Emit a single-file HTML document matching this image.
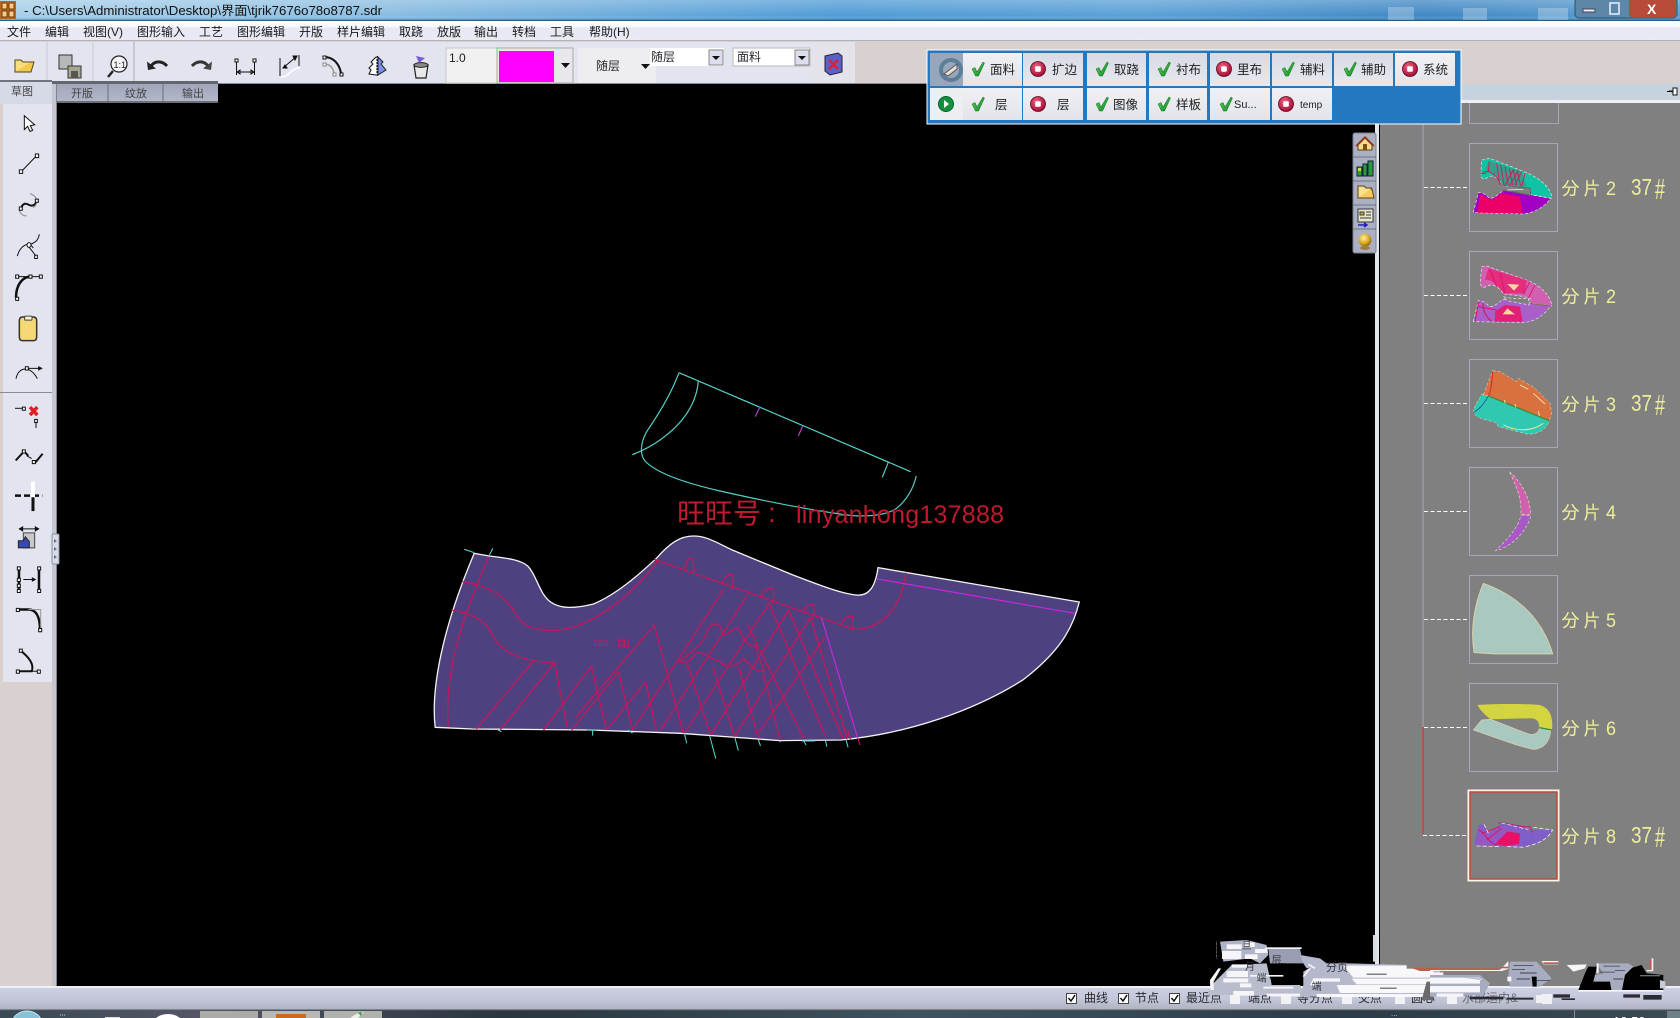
<!DOCTYPE html>
<html><head><meta charset="utf-8"><title>CAD</title>
<style>
html,body{margin:0;padding:0;background:#000;width:1680px;height:1018px;overflow:hidden}
svg{display:block;position:absolute;left:0;top:0}
text{font-family:"Liberation Sans","Noto Sans CJK SC",sans-serif}
.m{font-size:12px;fill:#1a1a1a}
.b{font-size:12.5px;fill:#222}
.y text{font-size:19px;fill:#eeee9c;font-family:"Liberation Sans","IPAGothic","WenQuanYi Zen Hei",sans-serif}
.y .c{letter-spacing:2px}
.y .n{font-size:23px}
.y .h{font-size:29px}
.ns *{vector-effect:non-scaling-stroke}
.s{font-size:12px;fill:#2a2a30}
.g{font-size:13px;fill:#33333c}
.tab{font-size:11px;fill:#444}
</style></head><body>
<svg width="1680" height="1018" viewBox="0 0 1680 1018" xmlns="http://www.w3.org/2000/svg">
<defs>
<linearGradient id="tb" x1="0" y1="0" x2="1" y2="0"><stop offset="0" stop-color="#a8cfe8"/><stop offset=".2" stop-color="#8fc0e2"/><stop offset=".5" stop-color="#4f9bd6"/><stop offset=".68" stop-color="#5aa0d6"/><stop offset=".85" stop-color="#3f87c4"/><stop offset="1" stop-color="#5b9ed0"/></linearGradient>
<linearGradient id="tbv" x1="0" y1="0" x2="0" y2="1"><stop offset="0" stop-color="#fff" stop-opacity=".25"/><stop offset=".8" stop-color="#fff" stop-opacity="0"/><stop offset="1" stop-color="#1c5f94" stop-opacity=".5"/></linearGradient>
<linearGradient id="mn" x1="0" y1="0" x2="0" y2="1"><stop offset="0" stop-color="#fff"/><stop offset=".3" stop-color="#f6f7fc"/><stop offset=".35" stop-color="#e6e8f4"/><stop offset="1" stop-color="#e8eaf4"/></linearGradient>
<linearGradient id="sb" x1="0" y1="0" x2="0" y2="1"><stop offset="0" stop-color="#cdd0e4"/><stop offset=".5" stop-color="#c4c7da"/><stop offset="1" stop-color="#aeb1bf"/></linearGradient>
<linearGradient id="tk" x1="0" y1="0" x2="1" y2="0"><stop offset="0" stop-color="#3a4a55"/><stop offset=".12" stop-color="#556"/><stop offset=".3" stop-color="#2a3640"/><stop offset=".55" stop-color="#40535f"/><stop offset=".8" stop-color="#2c3c48"/><stop offset="1" stop-color="#3c4a54"/></linearGradient>
<linearGradient id="bt" x1="0" y1="0" x2="0" y2="1"><stop offset="0" stop-color="#f0f0f4"/><stop offset="1" stop-color="#e2e4ea"/></linearGradient>
<linearGradient id="bt2" x1="0" y1="0" x2="0" y2="1"><stop offset="0" stop-color="#d8dbe4"/><stop offset="1" stop-color="#e6e8ee"/></linearGradient>
<linearGradient id="rt" x1="0" y1="0" x2="0" y2="1"><stop offset="0" stop-color="#9da2b8"/><stop offset="1" stop-color="#b4b8ca"/></linearGradient>
<linearGradient id="ck" x1="0" y1="0" x2="1" y2="1"><stop offset="0" stop-color="#60d060"/><stop offset="1" stop-color="#0c8a20"/></linearGradient>
<radialGradient id="rr" cx=".4" cy=".35" r=".7"><stop offset="0" stop-color="#f06080"/><stop offset="1" stop-color="#a00830"/></radialGradient>
<radialGradient id="gold" cx=".4" cy=".35" r=".7"><stop offset="0" stop-color="#fff0a0"/><stop offset=".6" stop-color="#d8a820"/><stop offset="1" stop-color="#806010"/></radialGradient>
<g id="ok"><path d="M0,2 L3,0.500 L5,5 L11,-5 L12.500,-4 L6.500,9 L3.500,9 Z" fill="url(#ck)" stroke="#0c6a18" stroke-width=".5"/></g>
<g id="no"><circle r="7.500" fill="url(#rr)" stroke="#60041c" stroke-width=".8"/><rect x="-2.800" y="-2.800" width="5.600" height="5.600" rx="1" fill="#fff"/></g>
</defs>

<!-- base -->
<rect width="1680" height="1018" fill="#000"/>
<!-- titlebar -->
<rect width="1680" height="20" fill="url(#tb)"/>
<rect width="1680" height="20" fill="url(#tbv)"/>
<rect y="20" width="1680" height="1" fill="#1f5d8e"/>
<g fill="#d6e4ee" opacity=".35"><rect x="1388" y="7" width="26" height="13"/><rect x="1463" y="8" width="24" height="12"/><rect x="1538" y="8" width="30" height="12"/></g>
<rect x="0" y="1" width="16" height="18" fill="#b96a20"/><path d="M2,3h5v6h-5zM9,3h5v6h-5zM2,11h5v6h-5zM9,11h5v6h-5z" fill="#f0d090" stroke="#7a3a10"/>
<text x="24" y="15" font-size="12.500" fill="#111" textLength="358" lengthAdjust="spacingAndGlyphs">- C:\Users\Administrator\Desktop\界面\tjrik7676o78o8787.sdr</text>
<!-- window btns -->
<rect x="1575" y="-2" width="102" height="20" rx="4" fill="#5d87a8" stroke="#2d4f6c"/>
<rect x="1629" y="-1" width="47" height="18" rx="3" fill="#b84a3a"/>
<rect x="1583" y="9" width="12" height="3" fill="#eef" stroke="#445"/>
<rect x="1610" y="3" width="9" height="11" fill="none" stroke="#eef" stroke-width="1.500"/>
<text x="1647" y="14" font-size="14" font-weight="bold" fill="#fff">X</text>

<!-- menu -->
<rect y="21" width="1680" height="20" fill="url(#mn)"/>
<rect y="40" width="1680" height="1" fill="#b0b2bc"/>
<g class="m">
<text x="7" y="36">文件</text><text x="45" y="36">编辑</text><text x="83" y="36">视图(V)</text><text x="137" y="36">图形输入</text><text x="199" y="36">工艺</text><text x="237" y="36">图形编辑</text><text x="299" y="36">开版</text><text x="337" y="36">样片编辑</text><text x="399" y="36">取跷</text><text x="437" y="36">放版</text><text x="474" y="36">输出</text><text x="512" y="36">转档</text><text x="550" y="36">工具</text><text x="589" y="36">帮助(H)</text>
</g>

<!-- toolbar -->
<rect y="41" width="1680" height="43" fill="#d9d1cf"/>
<rect y="42" width="811" height="42" fill="#e2e5ef"/>
<rect x="811" y="42" width="44" height="42" fill="#e4e2ea"/>
<rect y="83" width="930" height="1" fill="#8a8c94"/>
<g stroke="#c6c8d2"><path d="M47,42V84M93,42V84"/></g><path d="M134,42V84" stroke="#a8aab4"/>
<!-- folder -->
<path d="M15,72 L18,62 H34 L31,72 Z" fill="#f4c84a" stroke="#5a4510"/><path d="M15,72 V60 H21 L23,62 H31 V62" fill="#f8dc80" stroke="#5a4510"/>
<!-- save -->
<rect x="59" y="55" width="13" height="14" fill="#b8b8b8" stroke="#333"/>
<rect x="68" y="66" width="13" height="12" fill="#a8a890" stroke="#333"/><rect x="71" y="71" width="7" height="7" fill="#555"/>
<!-- zoom 1:1 -->
<circle cx="119" cy="64" r="8" fill="#f4f4f8" stroke="#222" stroke-width="1.200"/><text x="113.500" y="68" font-size="9" fill="#222">1:1</text><path d="M113,71 L108,77" stroke="#222" stroke-width="2.400"/>
<!-- undo / redo -->
<path d="M151,66 C155,60.500 162,60.500 167,66" fill="none" stroke="#222" stroke-width="3"/><path d="M147,61.500 L148,70 L156,68.500 Z" fill="#222"/>
<path d="M208,66 C204,60.500 197,60.500 192,66" fill="none" stroke="#333" stroke-width="3"/><path d="M212,61.500 L211,70 L203,68.500 Z" fill="#444"/>
<!-- box dim -->
<g fill="none" stroke="#111" stroke-width="1"><rect x="235" y="59" width="3" height="3" fill="#fff"/><rect x="253" y="59" width="3" height="3" fill="#fff"/><path d="M236.500,62V75M254.500,62V75M237,72H254M237,72l3,-2v4zM254,72l-3,-2v4z"/></g>
<!-- line tool -->
<g fill="none" stroke="#111"><path d="M280,58V76M299,55V66M283,68 L297,56"/><path d="M297,56l-4,0l2,4z" fill="#111"/><path d="M283,68l4,0l-2,-3z" fill="#111"/><path d="M281,77 C290,77 290,68 300,68" stroke="#fff" stroke-width="1.500"/></g>
<!-- arc -->
<path d="M324,57 C333,57 339,63 341,73" fill="none" stroke="#111" stroke-width="2"/><rect x="323" y="56" width="3" height="3" fill="#fff" stroke="#111"/><rect x="340" y="73" width="3" height="3" fill="#fff" stroke="#111"/>
<path d="M324,64 C330,64 333,68 334,73" fill="none" stroke="#999" stroke-width="1.500"/><rect x="323" y="63" width="3" height="3" fill="#fff" stroke="#888"/><rect x="333" y="73" width="3" height="3" fill="#fff" stroke="#888"/>
<!-- mirror -->
<path d="M377,56 V76" stroke="#111" stroke-dasharray="2 1"/><path d="M376,57 L371,62 L373,64 L369,68 L371,70 L369,74 L376,75" fill="#fff" stroke="#111"/><path d="M378,57 L383,62 L381,64 L386,70 L378,75 Z" fill="#7a90e0" stroke="#223"/>
<!-- bucket -->
<path d="M414,65 L428,65 L426,78 L416,78 Z" fill="#e8e8e8" stroke="#222" stroke-width="1.200"/><ellipse cx="421" cy="65" rx="7" ry="2.400" fill="#888" stroke="#222"/><path d="M416,56 L425,58 L419,63 Z" fill="#7a5ad8"/>
<!-- fields -->
<rect x="446" y="48" width="51" height="35" fill="#f0f0f0" stroke="#c8c8c8"/><text x="449" y="62" font-size="12" fill="#222">1.0</text>
<rect x="497" y="48" width="76" height="35" fill="#e8e8ec" stroke="#aaa"/>
<rect x="499" y="51" width="55" height="31" fill="#ff00ff"/>
<path d="M561,63h9l-4.500,5z" fill="#111"/>
<rect x="578" y="48" width="78" height="35" fill="#eeeef0"/><text x="596" y="70" class="s" font-size="13">随层</text><path d="M641,64h9l-4.500,5z" fill="#111"/>
<rect x="656" y="48" width="68" height="18" fill="#fff"/><rect x="650" y="48" width="70" height="18" fill="#fff"/><text x="651" y="61" class="s" font-size="13">随层</text>
<rect x="709" y="50" width="14" height="15" fill="#dde" stroke="#888"/><path d="M712,56h8l-4,4z" fill="#111"/>
<rect x="733" y="48" width="77" height="18" fill="#fff" stroke="#bbb"/><text x="737" y="61" class="s" font-size="13">面料</text>
<rect x="795" y="50" width="14" height="15" fill="#dde" stroke="#888"/><path d="M798,56h8l-4,4z" fill="#111"/>
<path d="M825,56 L838,53 L842,56 V72 L830,75 L825,71 Z" fill="#5a60c8" stroke="#223"/><path d="M829,60 L838,69 M838,60 L829,69" stroke="#e02030" stroke-width="2.500"/>

<!-- tabs -->
<rect x="0" y="80" width="52" height="24" fill="#d6d9e6"/><rect y="80" width="52" height="2" fill="#70747e"/>
<text x="11" y="95" class="tab">草图</text>
<rect x="52" y="81" width="166" height="22" fill="url(#rt)"/><rect x="52" y="81" width="166" height="3" fill="#62666e"/><rect x="52" y="101" width="166" height="2" fill="#6c7078"/>
<path d="M108,84V101M163,84V101" stroke="#6c7078"/>
<text x="71" y="97" class="tab">开版</text><text x="125" y="97" class="tab">纹放</text><text x="182" y="97" class="tab">输出</text>

<!-- left column -->
<rect x="0" y="104" width="52" height="883" fill="#d9d1cf"/>
<rect x="3" y="104" width="49" height="578" fill="#e2e5ef"/>
<rect x="52" y="84" width="5" height="903" fill="#c4c7d2"/>
<rect x="56" y="84" width="1" height="903" fill="#80828c"/>
<rect x="0" y="392" width="52" height="1" fill="#8a8c94"/>
<rect x="52" y="534" width="7" height="30" rx="1" fill="#d8dae6" stroke="#8a8ea0"/><path d="M54,539l3,2l-3,2zM54,547l3,2l-3,2zM54,555l3,2l-3,2z" fill="#6c7090"/>

<g transform="translate(0,90) scale(.3333,.3954)" class="ns" fill="none" stroke="#111" stroke-width="1">
<path d="M73,65 L73,100 L83,92 L90,105 L98,102 L91,90 L104,88 Z" fill="#fff"/>
<path d="M63,207 L111,165"/><rect x="58" y="202" width="10" height="9" fill="#fff"/><rect x="106" y="162" width="10" height="9" fill="#fff"/>
<path d="M63,298 C80,270 90,310 111,282" stroke-width="2"/><path d="M90,262 C112,268 118,285 100,298 M58,300 C58,312 70,320 80,318" stroke="#888"/><rect x="58" y="296" width="9" height="8" fill="#fff"/><rect x="106" y="276" width="9" height="8" fill="#fff"/>
<path d="M52,420 C60,395 85,380 100,400 M118,365 C112,390 95,385 85,395 L108,420"/><circle cx="87" cy="392" r="6" fill="#fff"/><rect x="104" y="418" width="8" height="8" fill="#fff"/>
<path d="M48,525 C48,490 70,472 92,472" stroke-width="2.500"/><path d="M50,472H122"/><rect x="47" y="468" width="9" height="8" fill="#fff"/><rect x="87" y="468" width="9" height="8" fill="#fff"/><rect x="118" y="468" width="9" height="8" fill="#fff"/><rect x="47" y="524" width="9" height="8" fill="#fff"/>
<path d="M58,584 Q58,574 68,574 H100 Q110,574 110,584 V624 Q110,634 100,634 H68 Q58,634 58,624 Z" fill="#f6d878" stroke="#333" stroke-width="1.500"/><rect x="74" y="572" width="22" height="10" rx="2" fill="#f8f0d0" stroke="#444"/>
<path d="M48,730 C55,700 90,695 112,730"/><path d="M80,704 H125"/><path d="M125,704l-9,-4v8z" fill="#111"/><rect x="76" y="700" width="9" height="8" fill="#fff"/>
<path d="M45,805 H68"/><rect x="67" y="802" width="9" height="8" fill="#fff"/><path d="M90,802 L112,822 M112,802 L90,822" stroke="#e02020" stroke-width="3.500"/><rect x="104" y="833" width="8" height="8" fill="#fff"/><path d="M108,841 V855"/>
<path d="M47,937 L72,914 L85,925" stroke-width="2"/><rect x="67" y="910" width="9" height="8" fill="#fff"/><path d="M80,925 L95,932"/><path d="M105,943 L128,920" stroke-width="2"/><rect x="97" y="937" width="9" height="8" fill="#fff"/>
<path d="M45,1026 H127" stroke-width="2.500" stroke-dasharray="6 3"/><path d="M99,990 V1030" stroke="#fff" stroke-width="4"/><path d="M99,1030 V1065" stroke-width="3"/>
<path d="M58,1110 H116"/><path d="M58,1110l10,-5v10zM116,1110l-10,-5v10z" fill="#111"/><rect x="70" y="1120" width="34" height="38" fill="#c8c8c8" stroke="#444"/><path d="M55,1158 V1140 L70,1140 L76,1130 L88,1142 V1158 Z" fill="#3848b0" stroke="#223"/>
<path d="M57,1210 V1265 M117,1210 V1265" stroke-width="2.500"/><path d="M70,1238 H106"/><path d="M106,1238l-9,-4v8z" fill="#111"/><g fill="#fff"><rect x="52" y="1206" width="9" height="8"/><rect x="52" y="1235" width="9" height="8"/><rect x="52" y="1250" width="9" height="8"/><rect x="52" y="1263" width="9" height="8"/><rect x="113" y="1206" width="9" height="8"/><rect x="113" y="1263" width="9" height="8"/></g>
<path d="M52,1314 H85 C110,1314 120,1335 120,1365" stroke-width="2.500"/><path d="M85,1314 H122 V1360" stroke="#999"/><rect x="49" y="1311" width="9" height="8" fill="#fff"/><rect x="116" y="1362" width="9" height="8" fill="#fff"/>
<path d="M62,1418 C80,1430 105,1450 95,1470 H52" stroke-width="2"/><path d="M95,1470 H118"/><rect x="58" y="1414" width="9" height="8" fill="#fff"/><rect x="49" y="1467" width="9" height="8" fill="#fff"/><rect x="112" y="1467" width="9" height="8" fill="#fff"/>
</g>

<!-- canvas drawing: upper piece -->
<g transform="translate(620,360) scale(.3333)" class="ns" fill="none" stroke="#55cfc6" stroke-width="1.200">
<path d="M177,38 L872,335"/>
<path d="M177,38 C150,110 110,170 80,215 C60,250 60,285 75,303 C110,340 200,370 300,393 C420,420 540,445 660,462 C740,475 800,465 830,445 C860,420 880,385 889,348"/>
<path d="M235,62 C230,130 190,190 120,240 C90,262 60,275 37,284"/>
<path d="M805,307 L787,352"/>
<path d="M420,140 L406,170" stroke="#b040c8"/>
<path d="M548,198 L535,228" stroke="#b040c8"/>
</g>

<!-- main shoe -->
<g transform="translate(420,530) scale(.4337,.3333)" class="ns">
<path d="M35,592 C25,480 50,300 125,70 L160,78 C205,85 235,90 250,110 C270,140 275,190 300,215 C320,235 350,238 400,222 C450,195 500,140 545,85 C575,40 600,18 630,18 C660,18 680,35 720,60 L860,135 C920,165 970,190 1005,195 C1035,200 1050,170 1056,113 L1520,216 C1505,300 1470,370 1390,450 C1280,540 1130,610 970,630 L830,632 L600,610 L390,600 L120,597 Z" fill="#4f4080" stroke="#f4f4f4" stroke-width="1.300"/>
<g fill="none" stroke="#c3185a" stroke-width="1.300">
<path d="M158,80 C110,230 55,400 65,590"/>
<path d="M98,155 C150,165 190,190 215,240 C235,290 265,303 310,302 C390,295 480,210 550,90"/>
<path d="M72,240 C120,250 150,270 165,310 C185,370 240,395 310,398 L340,595"/>
<path d="M540,88 L1000,298 C1060,298 1110,240 1120,128"/>
<path d="M260,395 L130,597 M310,398 L185,600 M395,408 L285,600 M395,408 L430,600 M458,425 L350,600 M458,425 L490,600 M540,285 L360,560 M540,285 L607,610 M520,455 L430,600 M520,455 L545,600"/>
<path d="M700,178 L490,600 M755,195 L555,600 M805,220 L610,610 M850,240 L670,615 M900,262 L725,620 M935,320 L780,610"/>
<path d="M615,398 L670,615 M675,410 L725,620 M735,410 L780,625 M790,420 L830,630 M755,285 L885,625 M805,220 L935,620 M850,240 L975,625 M900,262 L985,625"/>
<path d="M597,395 C620,370 650,350 660,310 C665,280 690,270 695,300 C700,335 720,290 735,295 C745,330 760,355 775,345 C780,390 790,410 795,422 C770,430 760,400 745,385 C735,410 700,420 690,390 C675,395 650,360 635,370 C625,395 610,400 597,395 Z"/>
<path d="M610,122 C612,95 620,82 628,85 C632,100 632,115 630,130 M695,165 C700,140 712,130 720,135 C724,150 722,165 718,178 M785,205 C790,180 805,170 814,175 C818,195 815,210 810,222 M883,250 C888,228 900,220 907,225 C910,245 908,258 905,268 M970,285 C975,265 988,255 997,260 C1000,275 1000,290 997,298"/>
<path d="M978,600 L985,628 M985,600 L993,628"/>
</g>
<path d="M1055,147 L1510,250 M925,260 L1010,628" fill="none" stroke="#c428d8" stroke-width="1.200"/>
<g stroke="#d01858" stroke-width="1" fill="none"><path d="M400,333h9M400,340h9M412,333h9M412,340h9M424,333h9M424,340h9M400,347h34M458,330h10v18h-10zM472,328v22h8v-22"/></g>
<path d="M1010,625 L1014,645" stroke="#d01858" fill="none"/>
<g stroke="#55cfc6" stroke-width="1.100" fill="none"><path d="M102,58 L125,68 M168,55 L160,75 M398,598 V617 M385,600 H410 M480,600 L490,610 M180,600 L188,605 M610,612 L615,640 M668,618 L682,686 M726,623 L734,662 M780,628 L785,648 M830,632 V637 M880,633 H910 M885,633 L890,645 M935,632 L938,650 M982,628 L987,652"/></g>
</g>

<!-- watermark -->
<g fill="#c01a2e">
<text x="677" y="523" font-size="28">旺旺号</text>
<text x="768" y="522" font-size="28">:</text>
<text x="796" y="523" font-size="25" textLength="208" lengthAdjust="spacing" font-family="Liberation Sans">linyanhong137888</text>
</g>

<!-- right panel -->
<rect x="1376" y="84" width="304" height="17" fill="#c5d3de"/>
<rect x="1376" y="100" width="304" height="3" fill="#f0f0f4"/>
<rect x="1375" y="84" width="4" height="903" fill="#e4e6ee"/>
<rect x="1380" y="103" width="300" height="883" fill="#808080"/>
<path d="M1669,91 h4 v-3 h4 v7 h-4 v-3 z M1667,91.500h3" stroke="#111" fill="#fff" stroke-width="1"/>

<!-- right mini toolbar -->
<rect x="1353" y="133" width="23" height="120" rx="2" fill="#acb0c4" stroke="#7c8090"/>
<path d="M1353,157h23M1353,181h23M1353,205h23M1353,229h23" stroke="#70747e"/>
<path d="M1358,150 V145 L1365,138 L1372,145 V150 Z" fill="#f2dc90" stroke="#604010"/><path d="M1356,146 L1365,137 L1374,146" fill="none" stroke="#a03010" stroke-width="1.500"/><rect x="1363" y="144" width="4" height="6" fill="#805010"/>
<path d="M1357,176 V167 H1362 V176 ZM1363,176 V164 H1367 V176ZM1368,176 V161 H1373 V176Z" fill="#2c9a40" stroke="#123"/><rect x="1358" y="168" width="3" height="3" fill="#e8d040"/>
<path d="M1358,198 L1360,189 H1372 L1374,198 Z" fill="#f4cc60" stroke="#604010"/><path d="M1358,198 V186 H1364 L1366,188 H1372" fill="#f8e090" stroke="#604010"/>
<rect x="1358" y="209" width="15" height="13" fill="#e8e8c8" stroke="#334"/><path d="M1360,212h4v3h-4zM1366,212h5M1366,215h5M1360,218h11" stroke="#334" fill="#d0b040"/><path d="M1358,225 h9 m-3,-2 l3,2 l-3,2" stroke="#2020c0" fill="none" stroke-width="1.500"/>
<circle cx="1365" cy="240" r="6.500" fill="url(#gold)"/><ellipse cx="1365" cy="248" rx="5" ry="2" fill="#a08040"/>

<!-- tree lines -->
<path d="M1423,103 V727" stroke="#a8a8bc" fill="none"/>
<path d="M1423,727 V834" stroke="#b84a38" fill="none" stroke-width="1.500"/>
<path d="M1424,187.500H1468M1424,295.500H1468M1424,403.500H1468M1424,511.500H1468M1424,619.500H1468M1424,727.500H1468M1423,835.500H1468" stroke="#fff" stroke-dasharray="4 2.500" fill="none"/>
<!-- boxes -->
<g fill="none" stroke="#a6a6be" stroke-width="1">
<path d="M1469.500,103V123.500H1558.500V103"/>
<rect x="1469.500" y="143.500" width="88" height="88"/>
<rect x="1469.500" y="251.500" width="88" height="88"/>
<rect x="1469.500" y="359.500" width="88" height="88"/>
<rect x="1469.500" y="467.500" width="88" height="88"/>
<rect x="1469.500" y="575.500" width="88" height="88"/>
<rect x="1469.500" y="683.500" width="88" height="88"/>
</g>
<rect x="1468.500" y="790.500" width="90" height="90" fill="none" stroke="#fff4e8" stroke-width="2"/>
<rect x="1470" y="792" width="87" height="87" fill="none" stroke="#b84a38" stroke-width="1.500"/>

<!-- thumbs A -->
<g transform="translate(1420,130) scale(.3333)" class="ns">
<path d="M185,90 L210,85 L320,128 C370,150 395,180 395,205 L330,193 L330,175 L250,168 C240,150 220,130 205,142 C190,150 182,150 183,125 Z" fill="#0fc4a4" stroke="#f4f4f4" stroke-width=".6" stroke-dasharray="3 2"/>
<path d="M160,248 L175,188 C195,185 205,208 215,205 C240,195 245,178 260,182 L392,205 C370,235 340,248 310,252 Z" fill="#a000c4" stroke="#f4f4f4" stroke-width=".6" stroke-dasharray="3 2"/>
<path d="M172,248 L180,195 C195,195 205,210 218,208 L245,190 L300,200 L308,250 Z" fill="#ea0068"/>
<path d="M205,92 L305,125 L320,170 L250,166 C235,142 215,125 195,125 Z" fill="#3c9c8c"/>
<g stroke="#d81458" stroke-width=".9" fill="none"><path d="M208,95 L205,125 M230,100 L240,165 M242,105 L252,165 M255,110 L265,165 M268,115 L278,165 M280,118 L290,165 M292,122 L302,168 M305,125 L285,165 M295,122 L270,165 M280,120 L255,165 M188,128 C200,120 225,125 240,160 M180,130 H200 M315,130 L305,170"/></g>
<path d="M245,165 L330,175 L332,195 M250,180 L330,195" stroke="#666" fill="none" stroke-width="1.200"/>
<path d="M262,180 L310,178" stroke="#fff" fill="none" stroke-width=".7"/>

<path d="M185,410 L200,408 L320,450 C370,470 395,505 395,528 L330,520 L330,505 C300,495 270,495 250,492 C240,475 220,460 205,467 C190,475 182,475 181,455 Z" fill="#d060b0" stroke="#f4f4f4" stroke-width=".6" stroke-dasharray="3 2"/>
<path d="M160,575 L175,512 C195,510 205,532 215,530 C240,520 245,505 260,508 L392,528 C370,560 340,575 310,578 Z" fill="#a860c8" stroke="#f4f4f4" stroke-width=".6" stroke-dasharray="3 2"/>
<path d="M205,415 L320,450 L315,490 L250,490 C235,465 210,445 195,450 Z" fill="#e82070" opacity=".8"/>
<path d="M225,545 L255,525 L300,530 L308,575 L225,575 Z" fill="#e8186a" opacity=".9"/>
<g stroke="#e01060" stroke-width=".9" fill="none"><path d="M210,420 L230,470 M240,430 L255,490 M330,455 L310,492 M345,465 L325,505"/></g>
<path d="M262,462 L298,464 L282,482 Z" fill="#f8d8a0"/><path d="M262,535 L248,553 L285,553 Z" fill="#f8d8a0"/>
<path d="M176,515 L165,575 M190,520 C185,540 205,570 215,572 M175,530 L230,540" stroke="#d81458" fill="none"/>
<path d="M330,520 L392,528" stroke="#7a7040" fill="none"/>
<path d="M250,500 C280,508 300,505 325,505 L328,525 L262,512 Z" fill="#808080" stroke="#fff" stroke-width=".6" stroke-dasharray="3 2"/>

<path d="M218,722 L240,725 L290,755 L295,745 L345,775 L390,820 L395,850 L388,872 L205,798 L190,795 Z" fill="#d87040" stroke="#f0e8c0" stroke-width=".5" stroke-dasharray="3 2"/>
<path d="M185,793 L205,798 L388,872 C380,900 350,915 320,912 L235,890 L230,878 C200,870 165,865 160,845 C165,820 178,810 185,793 Z" fill="#30c8b0" stroke="#f0e8c0" stroke-width=".5" stroke-dasharray="3 2"/>
<path d="M218,725 C216,760 212,785 205,798" stroke="#e02030" fill="none"/>
<path d="M205,798 C190,825 178,838 160,848" stroke="#2050a0" fill="none" stroke-width=".8"/>
<path d="M205,798 L388,872" stroke="#3a8a30" fill="none" stroke-width="1.200"/>
<path d="M300,765 L325,778 M340,790 L375,822 M250,885 C290,905 335,905 370,880 M253,810 L256,820 M285,822 L288,832 M355,843 L358,858" stroke="#f0e0a0" fill="none" stroke-width="1"/>
</g>

<!-- thumbs B -->
<g transform="translate(1420,460) scale(.3333)" class="ns">
<path d="M268,35 C295,60 330,100 332,165 L303,162 C305,110 285,70 268,35 Z" fill="#d060b0" stroke="#f0e8c0" stroke-width=".6" stroke-dasharray="3 2"/>
<path d="M303,165 L332,168 C320,215 275,260 227,272 C260,240 295,205 303,165 Z" fill="#a858c8" stroke="#f0e8c0" stroke-width=".6" stroke-dasharray="3 2"/>
<path d="M190,370 C260,395 360,450 398,582 L225,582 L162,578 C150,500 165,430 190,370 Z" fill="#a8c8c0" stroke="#e8d8a8" stroke-width=".8"/>
<path d="M172,735 C240,730 330,732 360,735 C390,745 400,770 396,810 L358,803 C358,785 350,775 330,775 L212,778 C195,765 180,750 172,735 Z" fill="#d4d440"/>
<path d="M185,780 L212,778 L320,820 C345,830 358,815 358,803 L392,812 C390,845 370,868 340,868 C300,860 260,845 160,810 Z" fill="#a8c8c0" stroke="#e8d8a8" stroke-width=".6"/>
<path d="M358,803 L396,810" stroke="#2a8a2a" fill="none" stroke-width="1.200"/>

<path d="M163,1155 L175,1095 L192,1093 L205,1120 L245,1090 L300,1095 L330,1110 L398,1110 C385,1135 360,1150 315,1160 Z" fill="#8060c8"/>
<path d="M170,1157 L178,1100 L200,1120 L240,1098 L280,1110 L300,1160 Z" fill="#9458c0"/>
<path d="M225,1152 L262,1115 L300,1120 L298,1152 L255,1158 Z" fill="#ea1068"/>
<path d="M175,1110 C195,1115 205,1150 230,1155 M185,1120 L240,1100 M200,1140 L245,1105 M235,1090 C260,1085 300,1105 330,1100 L338,1118" stroke="#d81458" fill="none" stroke-width=".9"/>
<path d="M192,1093 L205,1120 M245,1090 C270,1093 300,1105 325,1108 M340,1102 L398,1110 C385,1135 360,1150 318,1160 M170,1158 L240,1160 M262,1160 L315,1162" stroke="#fff" fill="none" stroke-width=".7" stroke-dasharray="4 2"/>
</g>

<!-- labels -->
<g class="y">
<text class="c" x="1561" y="195">分片</text><text x="1606" y="195" textLength="10" lengthAdjust="spacingAndGlyphs">2</text><text class="n" x="1631" y="195" textLength="21" lengthAdjust="spacingAndGlyphs">37</text><text class="h" x="1655" y="199" textLength="10" lengthAdjust="spacingAndGlyphs">#</text>
<text class="c" x="1561" y="303">分片</text><text x="1606" y="303" textLength="10" lengthAdjust="spacingAndGlyphs">2</text>
<text class="c" x="1561" y="411">分片</text><text x="1606" y="411" textLength="10" lengthAdjust="spacingAndGlyphs">3</text><text class="n" x="1631" y="411" textLength="21" lengthAdjust="spacingAndGlyphs">37</text><text class="h" x="1655" y="415" textLength="10" lengthAdjust="spacingAndGlyphs">#</text>
<text class="c" x="1561" y="519">分片</text><text x="1606" y="519" textLength="10" lengthAdjust="spacingAndGlyphs">4</text>
<text class="c" x="1561" y="627">分片</text><text x="1606" y="627" textLength="10" lengthAdjust="spacingAndGlyphs">5</text>
<text class="c" x="1561" y="735">分片</text><text x="1606" y="735" textLength="10" lengthAdjust="spacingAndGlyphs">6</text>
<text class="c" x="1561" y="843">分片</text><text x="1606" y="843" textLength="10" lengthAdjust="spacingAndGlyphs">8</text><text class="n" x="1631" y="843" textLength="21" lengthAdjust="spacingAndGlyphs">37</text><text class="h" x="1655" y="847" textLength="10" lengthAdjust="spacingAndGlyphs">#</text>
</g>

<!-- floating panel -->
<rect x="927" y="50" width="534" height="74" fill="#2478c0" stroke="#fff" stroke-width="1"/>
<rect x="930" y="53" width="33" height="33" fill="#98a6bc"/>
<rect x="930" y="88" width="33" height="32" fill="#eceef2"/>
<circle cx="951" cy="70" r="10" fill="none" stroke="#5a7f96" stroke-width="4"/><path d="M944,74 L957,64 L957,69 L948,76 Z" fill="#e8e0d0" stroke="#556"/>
<circle cx="946" cy="104" r="7.500" fill="#15903a" stroke="#063"/><path d="M944,100 l5,4 l-5,4 z" fill="#fff"/>
<g>
<rect x="963" y="53" width="59" height="33" fill="url(#bt)"/>
<rect x="1023" y="53" width="60" height="33" fill="url(#bt2)"/>
<rect x="1087" y="53" width="59" height="33" fill="url(#bt2)"/>
<rect x="1149" y="53" width="58" height="33" fill="url(#bt2)"/>
<rect x="1210" y="53" width="60" height="33" fill="url(#bt2)"/>
<rect x="1272" y="53" width="60" height="33" fill="url(#bt2)"/>
<rect x="1334" y="53" width="59" height="33" fill="url(#bt2)"/>
<rect x="1395" y="53" width="60" height="33" fill="url(#bt)"/>
<rect x="963" y="88" width="59" height="32" fill="url(#bt)"/>
<rect x="1023" y="88" width="60" height="32" fill="url(#bt)"/>
<rect x="1087" y="88" width="59" height="32" fill="url(#bt)"/>
<rect x="1149" y="88" width="58" height="32" fill="url(#bt)"/>
<rect x="1210" y="88" width="60" height="32" fill="url(#bt)"/>
<rect x="1272" y="88" width="60" height="32" fill="url(#bt)"/>
</g>
<use href="#ok" x="972" y="67"/><use href="#no" x="1038" y="69"/><use href="#ok" x="1096" y="67"/><use href="#ok" x="1158" y="67"/><use href="#no" x="1224" y="69"/><use href="#ok" x="1282" y="67"/><use href="#ok" x="1344" y="67"/><use href="#no" x="1410" y="69"/>
<use href="#ok" x="972" y="102"/><use href="#no" x="1038" y="104"/><use href="#ok" x="1096" y="102"/><use href="#ok" x="1158" y="102"/><use href="#ok" x="1220" y="102"/><use href="#no" x="1286" y="104"/>
<g class="b">
<text x="990" y="74">面料</text><text x="1052" y="74">扩边</text><text x="1114" y="74">取跷</text><text x="1176" y="74">衬布</text><text x="1237" y="74">里布</text><text x="1300" y="74">辅料</text><text x="1361" y="74">辅助</text><text x="1423" y="74">系统</text>
<text x="995" y="109">层</text><text x="1057" y="109">层</text><text x="1113" y="109">图像</text><text x="1176" y="109">样板</text>
<text x="1234" y="108" font-family="Liberation Mono" font-size="11">Su...</text><text x="1300" y="108" font-family="Liberation Mono" font-size="10">temp</text>
</g>

<!-- status bar -->
<rect y="986" width="1680" height="2" fill="#eef0f6"/>
<rect y="988" width="1680" height="22" fill="url(#sb)"/>
<g fill="#fff" stroke="#444"><rect x="1066.500" y="993.500" width="10" height="10"/><rect x="1118.500" y="993.500" width="10" height="10"/><rect x="1169.500" y="993.500" width="10" height="10"/></g>
<g fill="none" stroke="#111" stroke-width="1.500"><path d="M1068.500,998l2.500,3l4,-6M1120.500,998l2.500,3l4,-6M1171.500,998l2.500,3l4,-6"/></g>
<g fill="#f2f2f6"><rect x="1230" y="994" width="10" height="10"/><rect x="1281" y="994" width="10" height="10"/><rect x="1342" y="994" width="10" height="10"/><rect x="1395" y="994" width="10" height="10"/><rect x="1447" y="994" width="10" height="10"/><rect x="1542" y="994" width="10" height="10"/></g>
<g class="s"><text x="1084" y="1002">曲线</text><text x="1135" y="1002">节点</text><text x="1186" y="1002">最近点</text><text x="1248" y="1002">端点</text><text x="1297" y="1002">等分点</text><text x="1358" y="1002">交点</text><text x="1411" y="1002">圆心</text><text x="1462" y="1002" opacity=".6">水部运内&amp;</text></g>

<!-- glitch left -->
<g transform="translate(1200,935) scale(.3333)">
<path d="M60,20 L140,15 L200,30 L205,60 L180,85 L150,70 L70,80 Z" fill="#b0b4c8"/>
<path d="M80,28 h45 v14 h-45 z M66,48 h58 v24 h-58z M130,22 h34 v14 h-34z M165,42 h38 v12 h-38z M135,58 h38 v14 h-38z" fill="#f6f6f8"/>
<path d="M50,20 V70" stroke="#ccc" stroke-dasharray="2 2" fill="none" stroke-width="2"/>
<rect x="195" y="37" width="110" height="5" fill="#f6f6f8"/>
<path d="M205,42 H300 L310,85 L210,85 Z" fill="#9a9eb2"/>
<path d="M300,60 L360,70 L380,85 L320,100 L310,85 Z" fill="#b4b8cc"/>
<path d="M35,150 L95,90 L200,85 L210,130 L300,150 L310,180 L20,180 Z" fill="#b8bccd"/>
<path d="M205,90 C240,80 290,85 310,100 L305,150 L215,150 Z" fill="#000"/>
<path d="M30,135 l25,-35 h8 l-22,40 v25 h-10z M80,108 h64 v18 h-64z M95,88 h46 v10 h-46z M70,130 h75 v12 h-75z M120,145 h34 v12 h-34z M150,120 h100 v5 h-100z M190,155 h90 v6 h-90z M100,168 h62 v14 h-62z M200,176 h100 v8 h-100z" fill="#f6f6f8"/>
<path d="M310,110 L350,85 L450,85 L640,90 L720,100 V185 L300,185 L310,150 Z" fill="#b4b8ca"/>
<path d="M330,150 L340,130 H420 V140 H350 L345,155 Z" fill="#f6f6fa"/>
<path d="M430,92 H630 L640,100 L700,108 V128 H460 Z M455,131 H720 V148 H470 Z M410,150 H705 V174 H420 Z M350,177 H690 V186 H350 Z" fill="#f8f8fb"/>
<path d="M330,100 L310,125 M325,88 L345,100" stroke="#f6f6fa" stroke-width="5" fill="none"/>
<rect x="620" y="85" width="100" height="16" fill="#808080"/>
<path d="M630,98 H720 V108 H660 Z" fill="#b8604a"/>
<path d="M680,140 H700 V195 H665 Z" fill="#6a6a6a"/>
<text x="378" y="108" style="font-size:33px" fill="#33333c">分页</text>
<text x="335" y="165" style="font-size:30px" fill="#33333c">端</text>
<text x="215" y="85" style="font-size:30px" fill="#33333c">层</text>
<text x="135" y="105" style="font-size:30px" fill="#33333c">月</text>
<text x="170" y="140" style="font-size:30px" fill="#33333c">端</text>
<text x="125" y="42" style="font-size:30px" fill="#33333c">旦</text>
<rect x="500" y="116" width="60" height="3" fill="#444"/><rect x="540" y="158" width="50" height="3" fill="#444"/>
<path d="M525,0 V80" stroke="#d8dae4" stroke-width="12" fill="none"/>
</g>

<!-- glitch right -->
<g transform="translate(1430,935) scale(.3333)">
<path d="M0,105 H210 L235,78 V102 L215,108 H0 Z" fill="#f6f4f4"/>
<rect x="0" y="100" width="205" height="5" fill="#b8604a"/>
<rect x="210" y="95" width="25" height="5" fill="#b8604a"/>
<path d="M0,120 H150 L180,145 L160,180 L0,185 Z" fill="#a8acc0"/>
<path d="M0,112 H40 V120 H0Z M0,128 H150 V146 H0Z M0,153 H150 V172 H0Z M20,175 H100 V185 H20Z M100,128 L155,135 L150,130Z" fill="#f6f6fa"/>
<path d="M240,80 H320 L365,130 L330,155 H240 L235,125 Z" fill="#a8acc0"/>
<g fill="#555c68"><rect x="250" y="90" width="60" height="3"/><rect x="245" y="102" width="40" height="3"/><rect x="270" y="112" width="50" height="4"/><rect x="260" y="130" width="40" height="4"/><rect x="320" y="135" width="40" height="3"/></g>
<path d="M305,125 H320 V155 H308 Z" fill="#000"/>
<path d="M335,78 H385 V88 H340Z M410,90 L470,88 L465,100 L430,110Z" fill="#f6f4f4"/><rect x="340" y="82" width="45" height="5" fill="#b8604a"/><rect x="232" y="125" width="12" height="14" fill="#f6f4f4"/>
<path d="M445,165 L465,115 L475,95 L500,95 L495,125 L520,115 L600,100 L635,90 L650,115 L700,120 L700,165 Z" fill="#000"/>
<path d="M500,85 H595 L610,95 L585,120 L575,170 L545,170 L540,140 H490 L495,120 L520,115 Z" fill="#a8acc0"/>
<g fill="#555c68"><rect x="520" y="92" width="50" height="3"/><rect x="555" y="105" width="30" height="3"/><rect x="510" y="110" width="45" height="3"/><rect x="550" y="130" width="30" height="4"/></g>
<rect x="500" y="85" width="6" height="30" fill="#f6f4f4"/><rect x="665" y="70" width="5" height="38" fill="#f6f4f4"/><rect x="650" y="105" width="18" height="4" fill="#f6f4f4"/><rect x="660" y="75" width="4" height="30" fill="#b8604a"/>
<rect x="630" y="120" width="60" height="4" fill="#6a6e7a"/>
<path d="M445,165 H700 V170 H445 Z" fill="#f6f6fa"/>
<path d="M690,135 L706,140 V160 L690,160 Z" fill="#c8ccd8"/>
<g fill="#2c2c34"><rect x="120" y="185" width="100" height="8"/><rect x="230" y="188" width="80" height="6"/><rect x="370" y="178" width="50" height="10"/><rect x="395" y="190" width="40" height="5"/><rect x="580" y="178" width="50" height="10"/><rect x="640" y="180" width="55" height="14"/></g>
<rect x="318" y="180" width="40" height="24" fill="#f0f0f4"/>
</g>

<!-- taskbar -->
<rect y="1010" width="1680" height="8" fill="url(#tk)"/>
<rect y="1009.500" width="1680" height="1" fill="#505860"/>
<ellipse cx="27" cy="1024" rx="15" ry="13" fill="#8ac0d8" stroke="#c8e8f0"/>
<path d="M60,1015h6" stroke="#ccc" stroke-dasharray="1 1"/>
<rect x="105" y="1017" width="15" height="1" fill="#ddd"/>
<ellipse cx="168" cy="1026" rx="16" ry="12" fill="#fff"/>
<rect x="200" y="1011" width="58" height="8" fill="#aaaaa8"/>
<rect x="262" y="1011" width="58" height="8" fill="#b8b8b4"/><rect x="276" y="1014" width="30" height="4" fill="#c86a20"/>
<rect x="324" y="1011" width="58" height="8" fill="#b0b2ae"/><path d="M350,1018 Q358,1012 364,1012 L358,1018Z" fill="#eee"/><path d="M358,1013l4,-1l-1,4z" fill="#30a030"/>
<rect x="1574" y="1010" width="1" height="8" fill="#889"/>
<rect x="1667" y="1011" width="13" height="7" fill="#708088"/>
<text x="1613" y="1026" font-size="13" fill="#fff">10:50</text>
<text x="1391" y="1016" font-size="8" fill="#ccc">...</text>
</svg>
</body></html>
